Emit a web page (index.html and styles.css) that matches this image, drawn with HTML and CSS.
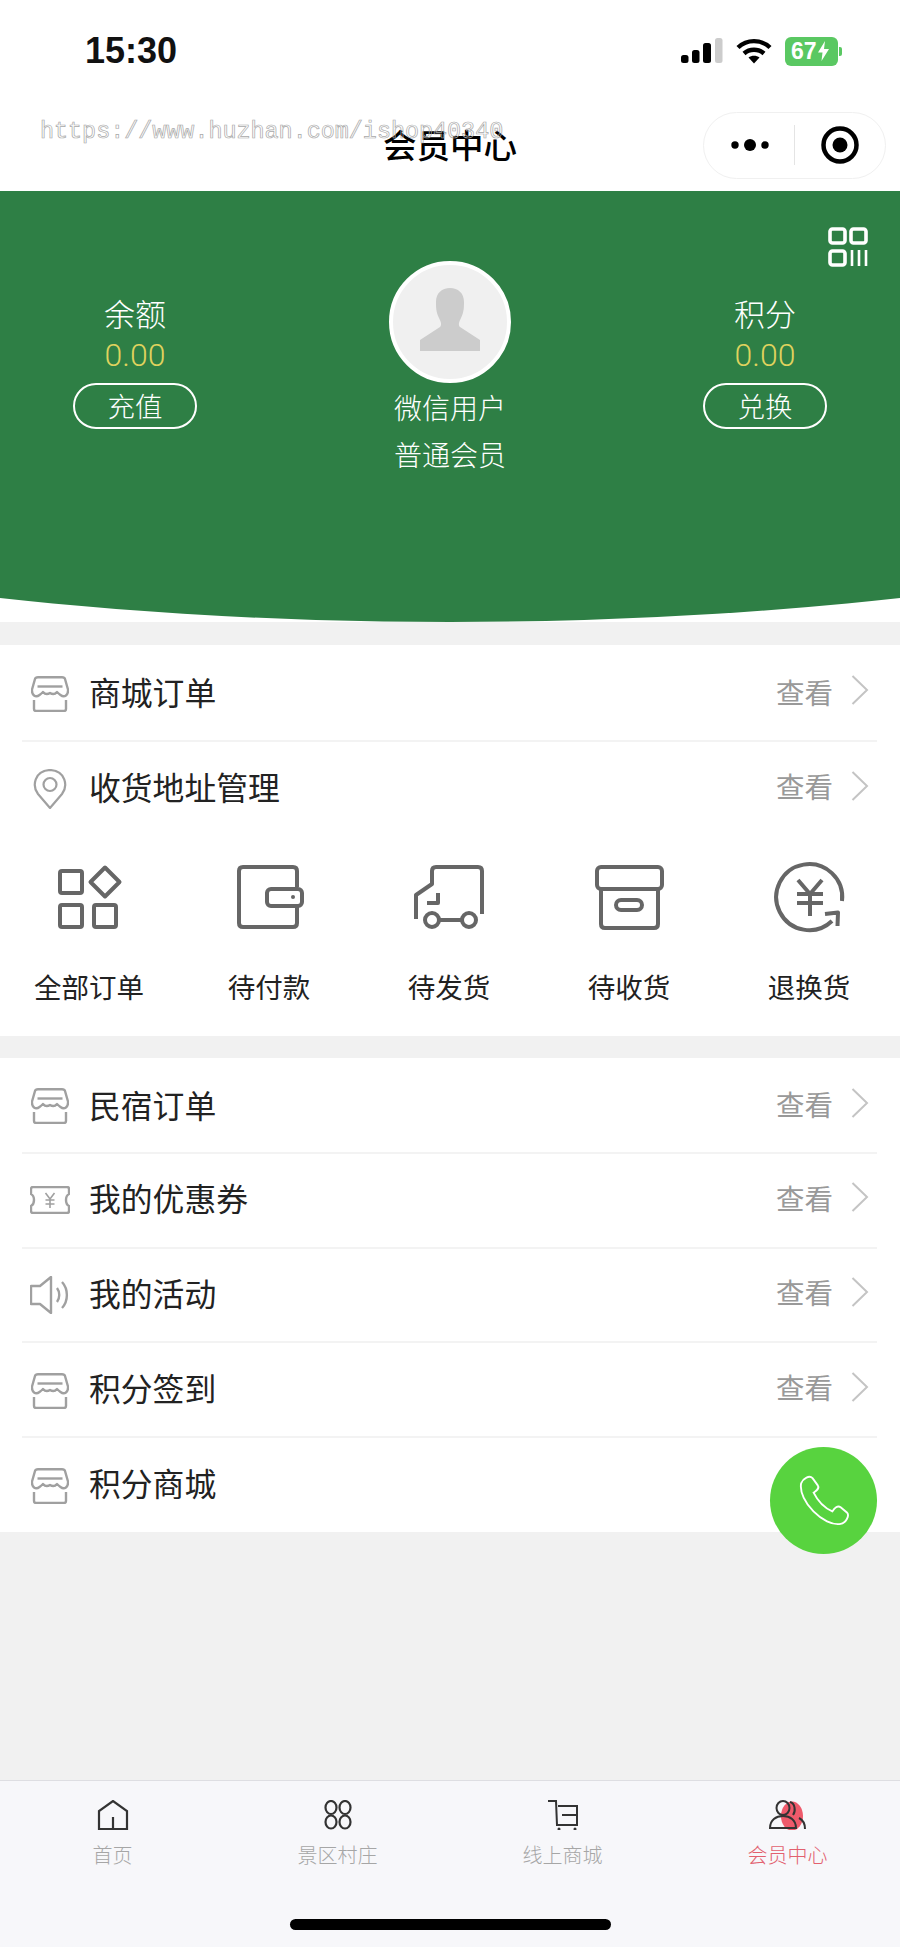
FILE: index.html
```html
<!DOCTYPE html>
<html lang="zh-CN">
<head>
    <meta charset="UTF-8">
    <meta name="viewport" content="width=device-width, initial-scale=1.0">
    <title>会员中心</title>
    <link rel="stylesheet" href="styles.css">
</head>
<body>
<div class="page">

    <header class="top">
        <div class="status">
            <span class="time">15:30</span>
            <div class="status-icons">
                <svg class="signal" width="42" height="26" viewBox="0 0 42 26">
                    <rect x="0" y="17" width="7.5" height="8" rx="2.5" fill="#000"/>
                    <rect x="11" y="12" width="7.5" height="13" rx="2.5" fill="#000"/>
                    <rect x="22" y="5" width="8" height="20" rx="2.5" fill="#000"/>
                    <rect x="34" y="0" width="7.5" height="25" rx="2.5" fill="#ccc"/>
                </svg>
                <svg class="wifi" width="36" height="26" viewBox="0 0 36 26" fill="none" stroke="#000" stroke-width="4.4">
                    <path d="M2 9.5C11 1 25 1 34 9.5"/>
                    <path d="M8 15.5C13.500 10.500 22.500 10.500 28 15.500"/>
                    <path d="M18 25.500L12.500 19.500C15.500 17 20.500 17 23.500 19.500Z" fill="#000" stroke="none"/>
                </svg>
                <div class="battery">
                    <span>67</span>
                    <svg width="11" height="20" viewBox="0 0 11 20"><path d="M7 0L0 11.500H4.500L3.500 20L11 8H6Z" fill="#fff"/></svg>
                </div>
            </div>
        </div>
        <div class="nav">
            <h1>会员中心</h1>
            <div class="capsule">
                <svg width="38" height="14" viewBox="0 0 38 14">
                    <circle cx="4" cy="7" r="3.700"/>
                    <circle cx="19" cy="7" r="6"/>
                    <circle cx="34" cy="7" r="3.700"/>
                </svg>
                <i class="capsule-line"></i>
                <svg width="38" height="38" viewBox="0 0 38 38">
                    <circle cx="19" cy="19" r="16.500" fill="none" stroke="#000" stroke-width="4.500"/>
                    <circle cx="19" cy="19" r="7.500"/>
                </svg>
            </div>
        </div>
    </header>

    <section class="hero-wrap">
        <div class="hero">
            <svg class="qr" width="40" height="40" viewBox="0 0 40 40" fill="none" stroke="#fff" stroke-width="3.600">
                <rect x="2" y="2" width="15" height="14" rx="2.500"/>
                <rect x="23" y="2" width="15" height="14" rx="2.500"/>
                <rect x="2" y="24" width="15" height="14" rx="2.500"/>
                <path d="M24 23V39M31 23V39M38 23V39" stroke-width="2.600"/>
            </svg>
            <div class="stat">
                <div class="stat-name">余额</div>
                <div class="stat-value">0.00</div>
                <div class="stat-btn">充值</div>
            </div>
            <div class="user">
                <div class="avatar">
                    <svg width="114" height="114" viewBox="0 0 114 114">
                        <path d="M27 86V75L47 62C49 60 48 57 46 53C43 47 43 42 43 37C43 28 49 23 57 23C65 23 71 28 71 37C71 42 71 47 68 53C66 57 65 60 67 62L87 75V86Z" fill="#ccc"/>
                    </svg>
                </div>
                <div class="user-line">微信用户</div>
                <div class="user-line">普通会员</div>
            </div>
            <div class="stat">
                <div class="stat-name">积分</div>
                <div class="stat-value">0.00</div>
                <div class="stat-btn">兑换</div>
            </div>
        </div>
    </section>

    <main class="main">
        <section class="card">
            <div class="row row-first">
                <svg class="row-icon icon-store" width="38" height="36" viewBox="0 0 38 36"><use href="#store"/></svg>
                <span class="row-name">商城订单</span>
                <span class="row-more">查看</span>
                <svg class="chev" width="18" height="30" viewBox="0 0 18 30"><path d="M1.500 1L16 15L1.500 29"/></svg>
            </div>
            <div class="row row-last">
                <svg class="row-icon" width="38" height="40" viewBox="0 0 38 40" fill="none" stroke="#a0a0a0" stroke-width="2.200">
                    <path d="M19 39L7 25C1 17 3 2 19 1C35 2 37 17 31 25Z" stroke-linejoin="round"/>
                    <circle cx="19" cy="15.500" r="6.500"/>
                </svg>
                <span class="row-name">收货地址管理</span>
                <span class="row-more">查看</span>
                <svg class="chev" width="18" height="30" viewBox="0 0 18 30"><path d="M1.500 1L16 15L1.500 29"/></svg>
            </div>

            <div class="orders">
                <div class="order">
                    <svg class="order-icon" width="68" height="68" viewBox="0 0 68 68">
                        <rect x="5" y="7" width="22" height="22" rx="2"/>
                        <rect x="5" y="41" width="22" height="22" rx="2"/>
                        <rect x="39" y="41" width="22" height="22" rx="2"/>
                        <path d="M50 3.500L64.500 18L50 32.500L35.500 18Z"/>
                    </svg>
                    <span>全部订单</span>
                </div>
                <div class="order">
                    <svg class="order-icon" width="68" height="68" viewBox="0 0 68 68">
                        <path d="M62 23V7Q62 3 58 3H8Q4 3 4 7V59Q4 63 8 63H58Q62 63 62 59V43"/>
                        <rect x="32" y="25" width="35" height="17" rx="4"/>
                        <circle cx="58" cy="33" r="2" fill="#666" stroke="none"/>
                    </svg>
                    <span>待付款</span>
                </div>
                <div class="order">
                    <svg class="order-icon" width="68" height="68" viewBox="0 0 68 68">
                        <path d="M67 50V7Q67 3 63 3H21Q17 3 17 7V20L1 31V55"/>
                        <path d="M23 29V39H12"/>
                        <circle cx="17" cy="56" r="7"/>
                        <circle cx="54" cy="56" r="7"/>
                        <path d="M24 56H47"/>
                    </svg>
                    <span>待发货</span>
                </div>
                <div class="order">
                    <svg class="order-icon" width="68" height="68" viewBox="0 0 68 68">
                        <rect x="2" y="3" width="65" height="22" rx="4"/>
                        <path d="M6 25V60Q6 64 10 64H59Q63 64 63 60V25"/>
                        <rect x="21" y="36" width="26" height="10" rx="5"/>
                    </svg>
                    <span>待收货</span>
                </div>
                <div class="order">
                    <svg class="order-icon" width="68" height="68" viewBox="0 0 68 68">
                        <path d="M67 37A33 33 0 1 0 57 57"/>
                        <path d="M50 50L63 48.500L62.500 62"/>
                        <path d="M23 16L35 30L47 16M22 30H48M22 39H48M35 30V52"/>
                    </svg>
                    <span>退换货</span>
                </div>
            </div>
        </section>

        <section class="card card-second">
            <div class="row row-first">
                <svg class="row-icon icon-store" width="38" height="36" viewBox="0 0 38 36"><use href="#store"/></svg>
                <span class="row-name">民宿订单</span>
                <span class="row-more">查看</span>
                <svg class="chev" width="18" height="30" viewBox="0 0 18 30"><path d="M1.500 1L16 15L1.500 29"/></svg>
            </div>
            <div class="row">
                <svg class="row-icon" width="40" height="28" viewBox="0 0 40 28" fill="none" stroke="#a0a0a0" stroke-width="2.400">
                    <path d="M3 1H37Q39 1 39 3V8C35 10 35 18 39 20V25Q39 27 37 27H3Q1 27 1 25V20C5 18 5 10 1 8V3Q1 1 3 1Z"/>
                    <path d="M15.500 7L20 13L24.500 7M15.500 14H24.500M15.500 18H24.500M20 13V22" stroke-width="1.600"/>
                </svg>
                <span class="row-name">我的优惠券</span>
                <span class="row-more">查看</span>
                <svg class="chev" width="18" height="30" viewBox="0 0 18 30"><path d="M1.500 1L16 15L1.500 29"/></svg>
            </div>
            <div class="row">
                <svg class="row-icon" width="40" height="38" viewBox="0 0 40 38" fill="none" stroke="#a0a0a0" stroke-width="2.400">
                    <path d="M1 10H10L21 1V37L10 28H1Z" stroke-linejoin="round"/>
                    <path d="M27 12C30 16 30 22 27 26"/>
                    <path d="M32 6C38.500 13 38.500 25 32 32"/>
                </svg>
                <span class="row-name">我的活动</span>
                <span class="row-more">查看</span>
                <svg class="chev" width="18" height="30" viewBox="0 0 18 30"><path d="M1.500 1L16 15L1.500 29"/></svg>
            </div>
            <div class="row">
                <svg class="row-icon icon-store" width="38" height="36" viewBox="0 0 38 36"><use href="#store"/></svg>
                <span class="row-name">积分签到</span>
                <span class="row-more">查看</span>
                <svg class="chev" width="18" height="30" viewBox="0 0 18 30"><path d="M1.500 1L16 15L1.500 29"/></svg>
            </div>
            <div class="row row-last">
                <svg class="row-icon icon-store" width="38" height="36" viewBox="0 0 38 36"><use href="#store"/></svg>
                <span class="row-name">积分商城</span>
            </div>
        </section>
    </main>

    <nav class="tabbar">
        <div class="tabs">
            <div class="tab">
                <svg width="38" height="30" viewBox="0 0 38 30" fill="none" stroke="#333" stroke-width="2.200">
                    <path d="M5 29V11L19 1L33 11V29Z"/>
                    <path d="M19 29V17"/>
                </svg>
                <span>首页</span>
            </div>
            <div class="tab">
                <svg width="38" height="30" viewBox="0 0 38 30" fill="none" stroke="#333" stroke-width="2.200">
                    <ellipse cx="12" cy="7.500" rx="5.500" ry="6.500"/>
                    <ellipse cx="26" cy="7.500" rx="5.500" ry="6.500"/>
                    <ellipse cx="12" cy="22" rx="5.500" ry="6.500"/>
                    <ellipse cx="26" cy="22" rx="5.500" ry="6.500"/>
                </svg>
                <span>景区村庄</span>
            </div>
            <div class="tab">
                <svg width="38" height="30" viewBox="0 0 38 30" fill="none" stroke="#333" stroke-width="2">
                    <path d="M4 1H12L13 25H33V6H14M18 15H33"/>
                    <circle cx="15" cy="29" r="1.500" fill="#333" stroke="none"/>
                    <circle cx="31" cy="29" r="1.500" fill="#333" stroke="none"/>
                </svg>
                <span>线上商城</span>
            </div>
            <div class="tab tab-on">
                <svg width="38" height="30" viewBox="0 0 38 30" fill="none" stroke="#333" stroke-width="2">
                    <ellipse cx="23" cy="16" rx="11" ry="14.500" fill="#ee5a6b" stroke="none"/>
                    <ellipse cx="14" cy="8" rx="6.500" ry="7"/>
                    <path d="M1 28C1 20 7 16 14 16C21 16 27 20 27 28Z"/>
                    <path d="M21 2C26 3 27 11 24 15M30 18C34 20 36 24 36 29"/>
                </svg>
                <span>会员中心</span>
            </div>
        </div>
        <div class="home-bar"></div>
    </nav>

    <div class="phone">
        <svg width="52" height="52" viewBox="0 0 50 50" fill="none" stroke="#fff" stroke-width="1.800">
            <path d="M3 8C5 3 11 0 14 3L19 10C21 13 18 15 15 17C19 25 26 32 33 35C35 32 38 29 41 31L47 36C50 39 46 46 41 47C25 50 0 25 3 8Z"/>
        </svg>
    </div>

    <div class="watermark">https://www.huzhan.com/ishop40340</div>

    <svg class="defs" width="0" height="0">
        <symbol id="store" viewBox="0 0 38 36">
            <g fill="none" stroke="#a0a0a0" stroke-width="2.400" stroke-linejoin="round">
                <path d="M7 1.200H31Q33.500 1.200 34 3L37 13.500C37.500 19 33.500 22 29.500 19Q27.500 17.500 26 16Q23 19.500 19 17Q15 19.500 12 16Q10.500 17.500 8.500 19C4.500 22 .5 19 1 13.500L4 3Q4.500 1.200 7 1.200Z"/>
                <path d="M6.500 10.500H31.500"/>
                <path d="M3 24V33Q3 35 5 35H33Q35 35 35 33V24"/>
            </g>
        </symbol>
    </svg>

</div>
</body>
</html>
```

FILE: styles.css
```css
* {
    box-sizing: border-box;
}

body {
    margin: 0;
    font-family: "Noto Sans CJK SC", "Noto Sans", sans-serif;
    color: #222;
    background-color: #f1f1f1;
}

.page {
    position: relative;
    width: 900px;
    height: 1947px;
    display: flex;
    flex-direction: column;
    overflow: hidden;
}

/* status bar and title */
.top {
    height: 191px;
    background-color: #fff;
}

.status {
    height: 100px;
    padding: 2px 62px 0 85px;
    display: flex;
    justify-content: space-between;
    align-items: center;
}

.time {
    font-family: "Liberation Sans", sans-serif;
    font-size: 36px;
    font-weight: 700;
    color: #111;
}

.status-icons {
    display: flex;
    align-items: center;
    gap: 13px;
}

.battery {
    position: relative;
    width: 53px;
    height: 29px;
    padding-left: 6px;
    border-radius: 6px;
    background-color: #5ac862;
    display: flex;
    align-items: center;
    gap: 1px;
    font-family: "Liberation Sans", sans-serif;
    font-size: 23px;
    font-weight: 700;
    color: #fff;
}

.battery::after {
    content: "";
    position: absolute;
    top: 10px;
    right: -4px;
    width: 3px;
    height: 9px;
    border-radius: 0 2px 2px 0;
    background-color: #5ac862;
}

.nav {
    height: 90px;
    padding: 0 14px;
    display: grid;
    grid-template-columns: 1fr auto 1fr;
    align-items: center;
}

.nav h1 {
    grid-column: 2;
    margin: -3px 0 0;
    font-size: 33.500px;
    font-weight: 500;
    color: #000;
}

.capsule {
    grid-column: 3;
    justify-self: end;
    width: 183px;
    height: 67px;
    border: 1px solid #f0f0f0;
    border-radius: 34px;
    display: flex;
    align-items: center;
    justify-content: space-between;
    padding: 0 26px 0 27px;
}

.capsule-line {
    width: 1px;
    height: 40px;
    margin-left: -2px;
    background-color: #e4e4e4;
}

/* green header */
.hero-wrap {
    height: 431px;
    background-color: #fff;
}

.hero {
    position: relative;
    height: 431px;
    padding: 70px 73px 0;
    background-color: #2e7f45;
    clip-path: ellipse(1368px 431px at 50% 0);
    display: flex;
    justify-content: space-between;
    color: #fff;
}

.qr {
    position: absolute;
    top: 36px;
    right: 32px;
}

.stat {
    width: 124px;
    padding-top: 31px;
    text-align: center;
}

.stat-name {
    font-size: 31px;
    font-weight: 300;
    line-height: 41px;
}

.stat-value {
    font-family: Roboto, sans-serif;
    font-size: 32px;
    font-weight: 300;
    line-height: 44px;
    color: #dfd25e;
}

.stat-btn {
    height: 46px;
    margin-top: 6px;
    border: 2px solid #fff;
    border-radius: 23px;
    font-size: 27.500px;
    font-weight: 300;
    line-height: 40px;
}

.user {
    width: 122px;
    display: flex;
    flex-direction: column;
    align-items: center;
}

.avatar {
    width: 122px;
    height: 122px;
    margin-bottom: 1px;
    border: 4px solid #fff;
    border-radius: 50%;
    background-color: #f0f0f0;
}

.avatar svg {
    display: block;
}

.user-line {
    font-size: 28px;
    font-weight: 300;
    line-height: 47px;
    white-space: nowrap;
}

/* cards */
.main {
    flex: 1;
    padding-top: 23px;
}

.card {
    background-color: #fff;
}

.card-second {
    margin-top: 22px;
}

.row {
    height: 94.670px;
    margin: 0 23px 0 22px;
    padding: 0 8px;
    border-bottom: 2px solid #f3f3f3;
    display: flex;
    align-items: center;
}

.row-first {
    height: 96.500px;
}

.row-last {
    height: 94px;
    border-bottom: none;
}

.row-icon {
    flex: none;
    width: 40px;
    margin-right: 19px;
}

.icon-store {
    margin-top: 3px;
}

.row-name {
    flex: 1;
    margin-bottom: 6px;
    font-size: 31.800px;
    color: #222;
}

.row-more {
    margin-right: 18px;
    margin-bottom: 6px;
    font-size: 28.500px;
    color: #999;
}

.chev {
    margin-top: -6px;
    fill: none;
    stroke: #c4c4c4;
    stroke-width: 2;
}

.row-first .row-name,
.row-first .row-more {
    margin-bottom: 2px;
}

.row-first .chev {
    margin-top: -4px;
}

.orders {
    margin-left: -1px;
    padding: 28px 0 29px;
    display: grid;
    grid-template-columns: repeat(5, 180px);
}

.order {
    display: flex;
    flex-direction: column;
    align-items: center;
    gap: 34px;
    font-size: 27.500px;
    line-height: 40px;
    color: #222;
}

.order span {
    margin-bottom: 1px;
}

.order-icon {
    display: block;
    overflow: visible;
    fill: none;
    stroke: #666;
    stroke-width: 4;
    stroke-linejoin: round;
}

/* bottom tabs */
.tabbar {
    height: 167px;
    padding-top: 19px;
    border-top: 1px solid #dedee2;
    background-color: #f7f7fa;
}

.tabs {
    display: grid;
    grid-template-columns: repeat(4, 225px);
}

.tab {
    display: flex;
    flex-direction: column;
    align-items: center;
    gap: 11px;
    font-size: 20px;
    font-weight: 300;
    line-height: 28px;
    color: #a6a6a6;
}

.tab-on {
    color: #e2606e;
}

.home-bar {
    width: 321px;
    height: 11px;
    margin: 50px auto 0;
    border-radius: 6px;
    background-color: #000;
}

/* things on top of the page */
.phone {
    position: absolute;
    top: 1447px;
    right: 23px;
    width: 107px;
    height: 107px;
    border-radius: 50%;
    background-color: #58d33f;
    display: flex;
    align-items: center;
    justify-content: center;
}

.watermark {
    position: absolute;
    top: 117px;
    left: 40px;
    font-family: "Liberation Mono", monospace;
    font-size: 23.400px;
    line-height: 30px;
    white-space: nowrap;
    color: transparent;
    -webkit-text-stroke: 0.7px #a8a8a8;
}

.defs {
    position: absolute;
}
```
